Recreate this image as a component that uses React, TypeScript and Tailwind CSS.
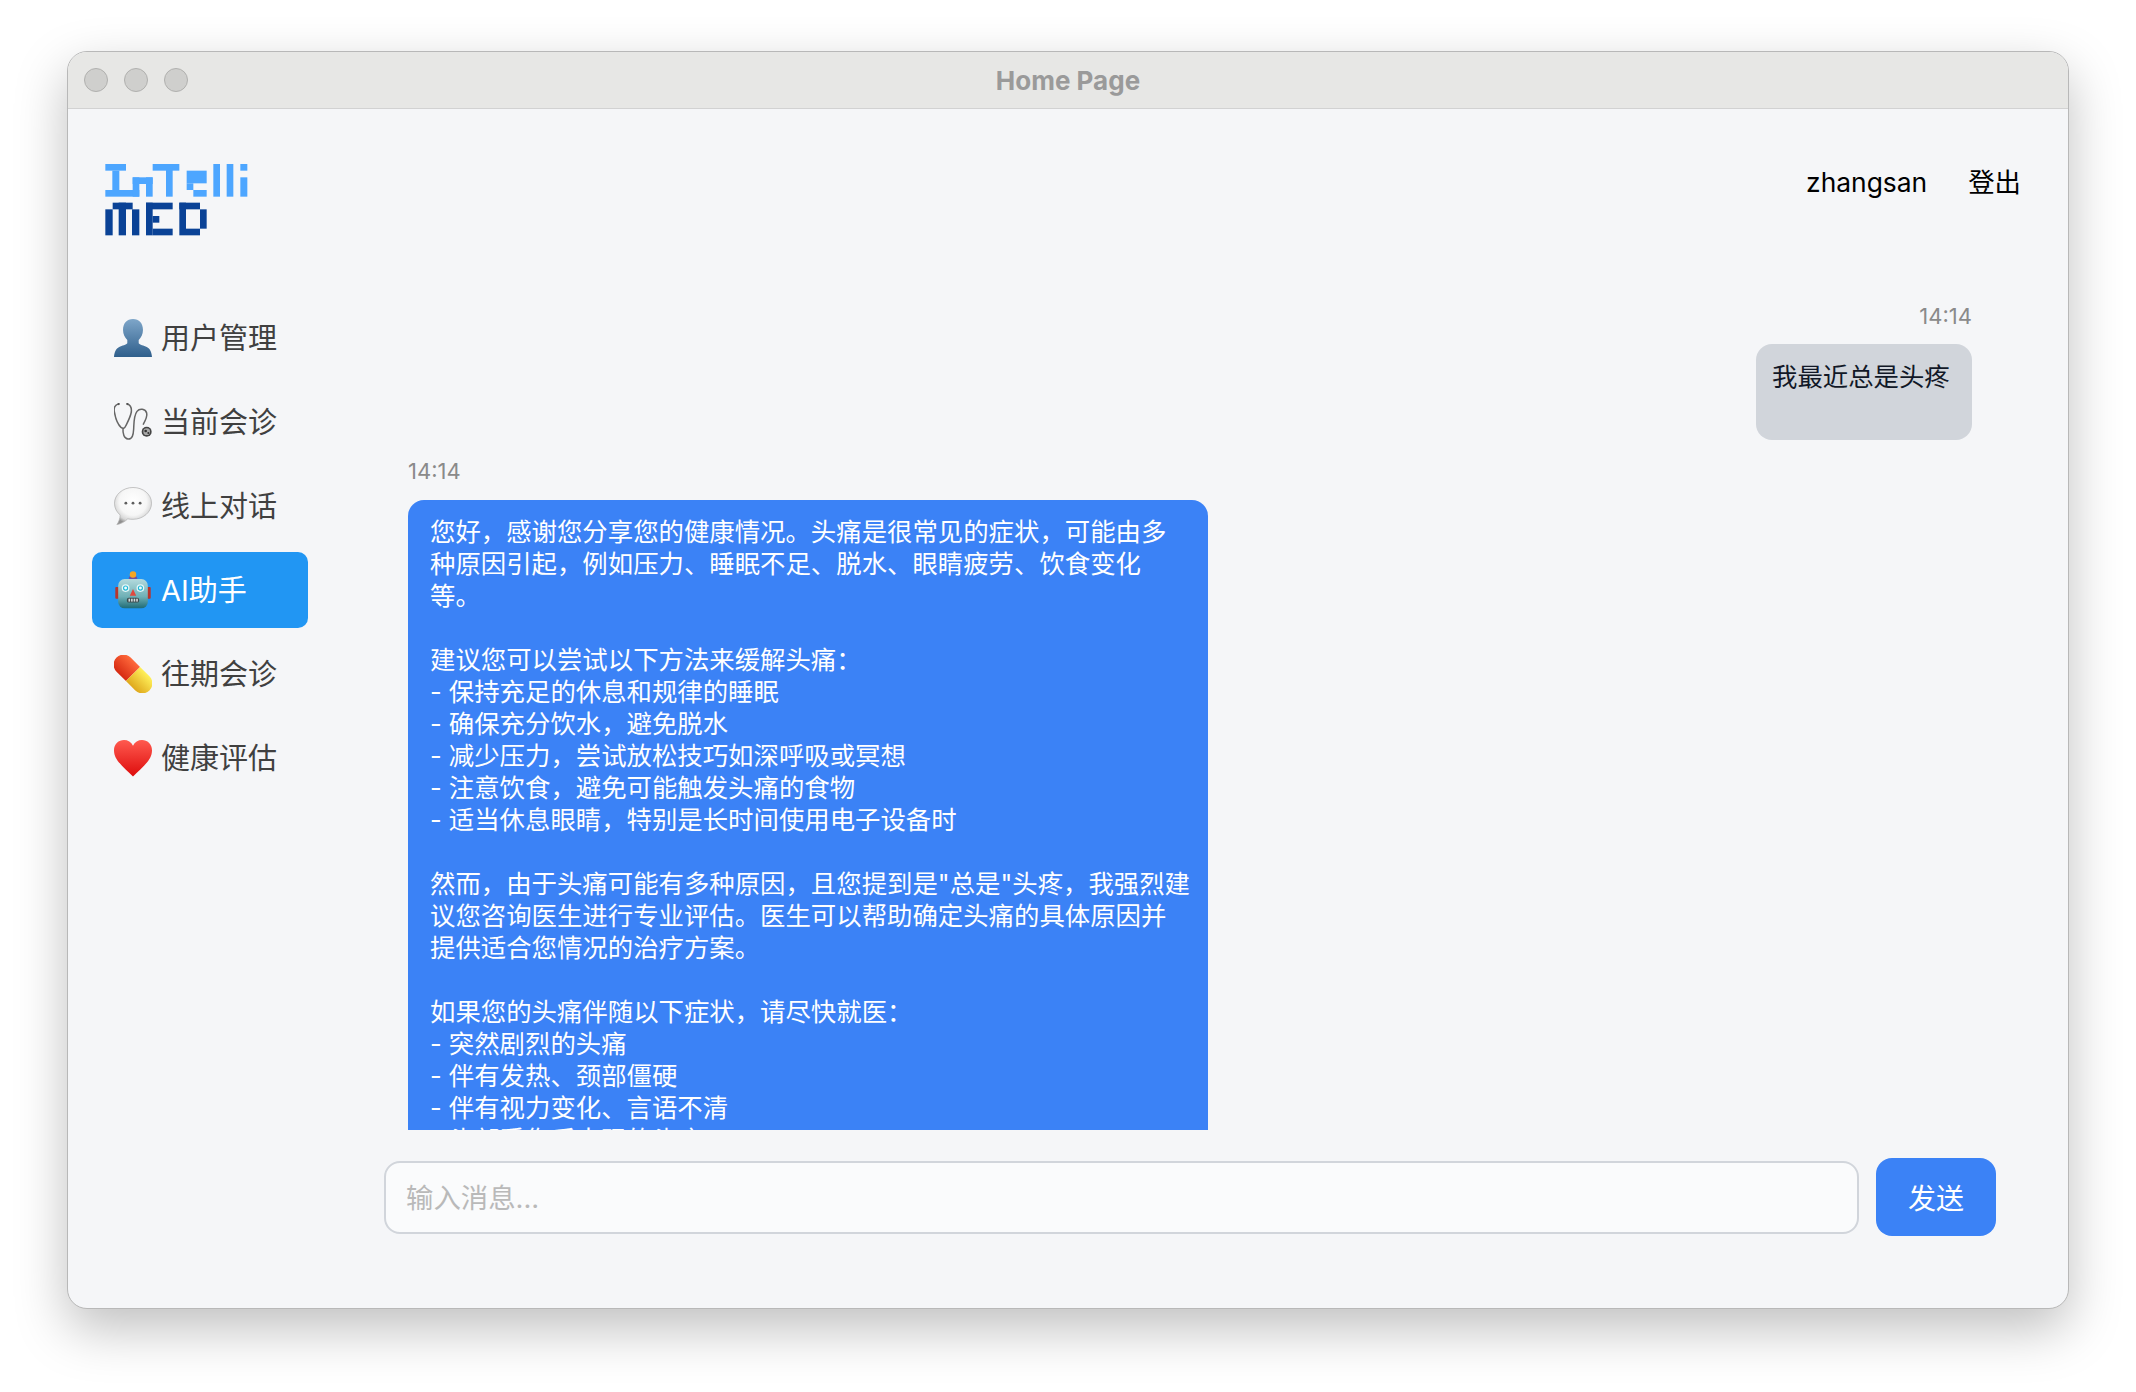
import React from 'react';

const font = { fontFamily: 'Inter, "Noto Sans CJK SC", sans-serif' };

const PersonIcon = () => (
  <svg viewBox="0 0 40 40" className="w-[38px] h-[38px] shrink-0">
    <defs>
      <linearGradient id="person" x1="0" y1="0" x2="0" y2="1">
        <stop offset="0" stopColor="#7ea6c9" />
        <stop offset="1" stopColor="#2f5f8c" />
      </linearGradient>
    </defs>
    <path d="M20 0c6.500 0 10.500 4.500 10.500 11.500 0 4.500-2 8-4.500 10.500v3.500c1 1.500 5.500 2.500 8.500 4 3.500 1.800 5 5 5.500 10.500H0c.5-5.500 2-8.700 5.500-10.500 3-1.500 7.500-2.500 8.500-4V22c-2.500-2.500-4.500-6-4.500-10.500C9.500 4.500 13.500 0 20 0z" fill="url(#person)" />
  </svg>
);

// drawn in coordinates of a 3x crop, hence the offset viewBox
const StethoscopeIcon = () => (
  <svg viewBox="18 16 114 114" className="w-[38px] h-[38px] shrink-0" fill="none">
    <path d="M32 19C22 21 17 30 19 42c3 18 10 38 20 47 6 5 11 3 14-4 6-12 14-26 17-42 1-10-2-21-12-24" stroke="#666666" strokeWidth="4.500" />
    <path d="M45 93c-1 14 3 30 15 31 13 1 16-12 17-30 1-18 0-40 10-53 8-10 25-8 29 5 3 11-3 21-11 35" stroke="#666666" strokeWidth="4.500" />
    <circle cx="32" cy="19" r="3.500" fill="#555555" />
    <circle cx="58" cy="19" r="3.500" fill="#555555" />
    <circle cx="116" cy="102" r="15" fill="#444444" />
    <circle cx="116" cy="102" r="10" fill="#a8a8a8" />
    <circle cx="113" cy="100" r="4" fill="#333333" />
    <circle cx="121" cy="106" r="3" fill="#333333" />
  </svg>
);

const ChatIcon = () => (
  <svg viewBox="0 0 40 40" className="w-[38px] h-[38px] shrink-0">
    <defs>
      <radialGradient id="chat" cx="0.5" cy="0.38" r="0.62">
        <stop offset="0" stopColor="#ffffff" />
        <stop offset="0.6" stopColor="#f6f6f6" />
        <stop offset="0.85" stopColor="#d6d6d6" />
        <stop offset="1" stopColor="#8f8f8f" />
      </radialGradient>
    </defs>
    <path d="M20 .5C9.500.5.500 8 .5 17c0 5.500 2.500 9.500 6 12.500C6.500 33 5 37 3 39.500c4.500-.5 9-3.500 11.500-6 2 .5 3.500.5 5.500.5 10.500 0 19.500-7.500 19.500-17S30.500.5 20 .5z" fill="url(#chat)" stroke="#b4b4b4" strokeWidth="0.800" />
    <circle cx="12.500" cy="17" r="1.500" fill="#5f5f5f" />
    <circle cx="20" cy="17" r="1.500" fill="#5f5f5f" />
    <circle cx="27.500" cy="17" r="1.500" fill="#5f5f5f" />
  </svg>
);

const RobotIcon = () => (
  <svg viewBox="18 14 114 118" className="w-[38px] h-[38px] shrink-0">
    <defs>
      <linearGradient id="robot" x1="0" y1="0" x2="0" y2="1">
        <stop offset="0" stopColor="#b3dadd" />
        <stop offset="0.6" stopColor="#6fb0b6" />
        <stop offset="1" stopColor="#1f6b75" />
      </linearGradient>
    </defs>
    <rect x="62" y="31" width="26" height="12" rx="4" fill="#6f4fa0" />
    <circle cx="75" cy="25" r="10" fill="#f5a623" />
    <rect x="20" y="64" width="12" height="36" rx="3" fill="#b8352c" />
    <rect x="118" y="64" width="12" height="36" rx="3" fill="#b8352c" />
    <rect x="29" y="39" width="92" height="91" rx="20" fill="url(#robot)" />
    <circle cx="52" cy="67" r="12" fill="#e6f7f8" />
    <circle cx="52" cy="67" r="8" fill="#22b8d6" />
    <circle cx="52" cy="67" r="4.500" fill="#f0fdff" />
    <circle cx="98" cy="67" r="12" fill="#e6f7f8" />
    <circle cx="98" cy="67" r="8" fill="#22b8d6" />
    <circle cx="98" cy="67" r="4.500" fill="#f0fdff" />
    <path d="M75 70l10 21H65z" fill="#e0483e" />
    <rect x="56" y="97" width="38" height="15" rx="6" fill="#3a484b" />
    <rect x="61" y="100" width="5" height="9" fill="#d5dcdd" />
    <rect x="69" y="100" width="5" height="9" fill="#d5dcdd" />
    <rect x="77" y="100" width="5" height="9" fill="#d5dcdd" />
    <rect x="85" y="100" width="5" height="9" fill="#d5dcdd" />
  </svg>
);

const PillIcon = () => (
  <svg viewBox="0 0 40 40" className="w-[38px] h-[38px] shrink-0">
    <defs>
      <linearGradient id="pillRed" x1="0" y1="0" x2="0" y2="1">
        <stop offset="0" stopColor="#ff6a3c" />
        <stop offset="1" stopColor="#d62a12" />
      </linearGradient>
      <linearGradient id="pillYellow" x1="0" y1="0" x2="0" y2="1">
        <stop offset="0" stopColor="#fff05a" />
        <stop offset="1" stopColor="#dfa81c" />
      </linearGradient>
    </defs>
    <g transform="rotate(45 20 20)">
      <path d="M20 9.500H6a10.500 10.500 0 0 0 0 21H20z" fill="url(#pillRed)" />
      <path d="M20 9.500h14a10.500 10.500 0 0 1 0 21H20z" fill="url(#pillYellow)" />
    </g>
  </svg>
);

const HeartIcon = () => (
  <svg viewBox="0 0 40 40" className="w-[38px] h-[38px] shrink-0">
    <defs>
      <linearGradient id="heart" x1="0" y1="0" x2="0" y2="1">
        <stop offset="0" stopColor="#ff5a4f" />
        <stop offset="1" stopColor="#dd0c0c" />
      </linearGradient>
    </defs>
    <path d="M20 39.500C12 31 0 23 0 12 0 5 5 1 10.500 1c4 0 7.800 2 9.500 6 1.700-4 5.500-6 9.500-6C35 1 40 5 40 12c0 11-12 19-20 27.500z" fill="url(#heart)" />
  </svg>
);

const Logo = () => (
  <svg viewBox="0 0 480 240" className="w-[160px] h-[80px] block">
    <g fill="#4da6ff">
      <rect x="16" y="18" width="62" height="20" />
      <rect x="37" y="38" width="21" height="60" />
      <rect x="16" y="96" width="102" height="20" />
      <rect x="98" y="58" width="60" height="20" />
      <rect x="98" y="58" width="20" height="58" />
      <rect x="138" y="58" width="20" height="58" />
      <rect x="158" y="18" width="80" height="20" />
      <rect x="198" y="18" width="20" height="98" />
      <rect x="260" y="38" width="60" height="38" />
      <rect x="260" y="76" width="20" height="20" />
      <rect x="280" y="96" width="40" height="20" />
      <rect x="340" y="18" width="20" height="98" />
      <rect x="380" y="18" width="20" height="98" />
      <rect x="421" y="18" width="21" height="20" />
      <rect x="421" y="58" width="21" height="58" />
    </g>
    <g fill="#0a4296">
      <rect x="16" y="154" width="22" height="78" />
      <rect x="38" y="134" width="60" height="20" />
      <rect x="56" y="134" width="22" height="98" />
      <rect x="96" y="154" width="22" height="78" />
      <rect x="138" y="134" width="80" height="20" />
      <rect x="138" y="134" width="20" height="98" />
      <rect x="158" y="174" width="20" height="20" />
      <rect x="158" y="212" width="60" height="20" />
      <rect x="238" y="134" width="62" height="20" />
      <rect x="238" y="134" width="20" height="98" />
      <rect x="258" y="212" width="42" height="20" />
      <rect x="300" y="154" width="20" height="58" />
    </g>
  </svg>
);

const navItems = [
  { label: '用户管理', icon: <PersonIcon /> },
  { label: '当前会诊', icon: <StethoscopeIcon /> },
  { label: '线上对话', icon: <ChatIcon /> },
  { label: 'AI助手', icon: <RobotIcon />, active: true },
  { label: '往期会诊', icon: <PillIcon /> },
  { label: '健康评估', icon: <HeartIcon /> },
];

const reply = `您好，感谢您分享您的健康情况。头痛是很常见的症状，可能由多种原因引起，例如压力、睡眠不足、脱水、眼睛疲劳、饮食变化等。

建议您可以尝试以下方法来缓解头痛：
- 保持充足的休息和规律的睡眠
- 确保充分饮水，避免脱水
- 减少压力，尝试放松技巧如深呼吸或冥想
- 注意饮食，避免可能触发头痛的食物
- 适当休息眼睛，特别是长时间使用电子设备时

然而，由于头痛可能有多种原因，且您提到是"总是"头疼，我强烈建议您咨询医生进行专业评估。医生可以帮助确定头痛的具体原因并提供适合您情况的治疗方案。

如果您的头痛伴随以下症状，请尽快就医：
- 突然剧烈的头痛
- 伴有发热、颈部僵硬
- 伴有视力变化、言语不清
- 头部受伤后出现的头痛`;

export default function App() {
  return (
    <div className="w-[2136px] h-[1392px] bg-white pt-[51px] pl-[67px]" style={font}>
      <div className="w-[2002px] h-[1258px] rounded-[20px] overflow-hidden bg-[#f5f6f8] border border-[#b8b8b8] shadow-[0_20px_52px_rgba(0,0,0,0.25)] flex flex-col">
        {/* Title bar */}
        <div className="h-[57px] shrink-0 bg-[#e7e7e5] border-b border-[#d2d2d2] flex items-center relative pl-[16px] gap-[16px]">
          <span className="w-[24px] h-[24px] rounded-full bg-[#cfcfcd] border border-[#b0b0ae]" />
          <span className="w-[24px] h-[24px] rounded-full bg-[#cfcfcd] border border-[#b0b0ae]" />
          <span className="w-[24px] h-[24px] rounded-full bg-[#cfcfcd] border border-[#b0b0ae]" />
          <div className="absolute inset-0 flex items-center justify-center text-[26px] font-bold text-[#9a9a9a]">Home Page</div>
        </div>

        <div className="flex-1 flex min-h-0">
          {/* Sidebar */}
          <div className="w-[291px] shrink-0 pl-[24px] flex flex-col">
            <div className="h-[191px] pt-[49px] pl-[8px]">
              <Logo />
            </div>
            <div className="flex flex-col gap-[8px] w-[216px]">
              {navItems.map((item) => (
                <div
                  key={item.label}
                  className={`h-[76px] rounded-[10px] flex items-center pl-[22px] gap-[9px] text-[29px] ${item.active ? 'bg-[#2196f3] text-white' : 'text-[#404040]'}`}
                >
                  {item.icon}
                  <span className="mt-[2px]">{item.label}</span>
                </div>
              ))}
            </div>
          </div>

          {/* Chat */}
          <div className="flex-1 min-w-0 flex flex-col">
            <div className="h-[148px] shrink-0 flex items-center justify-end gap-[41px] pr-[47px] text-[26.4px] text-black">
              <span>zhangsan</span>
              <span>登出</span>
            </div>
            <div className="h-[873px] shrink-0 overflow-hidden pt-[43px] pl-[49px] pr-[96px]">
              <div className="flex flex-col items-end">
                <div className="text-[22px] leading-[32px] text-[#8a8a8a]">14:14</div>
                <div className="w-[216px] h-[96px] rounded-[16px] bg-[#d1d5db] mt-[12px] pl-[16px] pt-[17px] text-[25.4px] leading-[32px] text-[#111827]">我最近总是头疼</div>
              </div>
              <div className="text-[22px] leading-[32px] text-[#8a8a8a] mt-[15px]">14:14</div>
              <div className="w-[800px] rounded-[16px] bg-[#3b82f6] mt-[13px] pl-[22px] pr-[18px] py-[16px] text-[25.4px] leading-[32px] text-white whitespace-pre-wrap">{reply}</div>
            </div>
            <div className="flex items-center gap-[17px] pl-[25px] pr-[72px] mt-[28px]">
              <div className="flex-1 h-[73px] rounded-[16px] border-2 border-[#d1d5db] bg-[#fafbfc] pl-[20px] pt-[3px] flex items-center text-[27.4px] text-[#b9b9b9]">输入消息...</div>
              <div className="w-[120px] h-[78px] rounded-[16px] bg-[#3b82f6] pt-[3px] flex items-center justify-center text-[28px] text-white">发送</div>
            </div>
          </div>
        </div>
      </div>
    </div>
  );
}
